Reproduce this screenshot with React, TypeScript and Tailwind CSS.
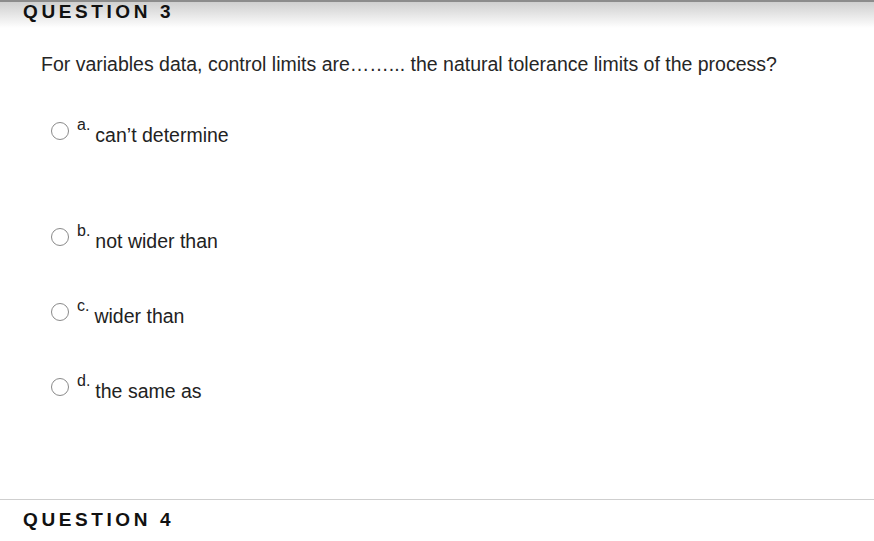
import * as React from "react";

const options = [
  { key: "a", label: "can’t determine", gap: "h-[82px]" },
  { key: "b", label: "not wider than", gap: "h-[51px]" },
  { key: "c", label: "wider than", gap: "h-[51px]" },
  { key: "d", label: "the same as", gap: "" },
];

function Option({ letter, label }: { letter: string; label: string }) {
  return (
    <div className="flex h-[24px] items-center">
      <span className="block h-[18px] w-[18px] rounded-full border border-[#8a8a8a] bg-white" />
      <span className="ml-[8px] -mt-[13px] text-[16px] leading-none text-[#222]">{letter}.</span>
      <span className="ml-[5px] mt-[9px] text-[19.5px] leading-none text-[#222]">{label}</span>
    </div>
  );
}

export default function App() {
  return (
    <div className="h-[541px] w-[874px] overflow-hidden bg-white font-['Liberation_Sans',Arial,sans-serif]">
      <div className="h-[28px] border-t-2 border-[#8c8c8c] bg-gradient-to-b from-[#cfcfcf] to-white pl-[23px]">
        <h2 className="text-[19px] font-bold leading-[20px] tracking-[3.6px] text-[#111]">QUESTION 3</h2>
      </div>

      <div className="pl-[41px] pt-[24px]">
        <p className="text-[19.5px] leading-[24px] text-[#262626]">
          For variables data, control limits are……... the natural tolerance limits of the process?
        </p>
      </div>

      <div className="pl-[51px] pt-[43px]">
        {options.map((o) => (
          <div key={o.key}>
            <Option letter={o.key} label={o.label} />
            {o.gap ? <div className={o.gap} /> : null}
          </div>
        ))}
      </div>

      <div className="mt-[100px] border-t border-[#cfcfcf] pl-[23px] pt-[10px]">
        <h2 className="text-[19px] font-bold leading-[20px] tracking-[3.6px] text-[#111]">QUESTION 4</h2>
      </div>
    </div>
  );
}
